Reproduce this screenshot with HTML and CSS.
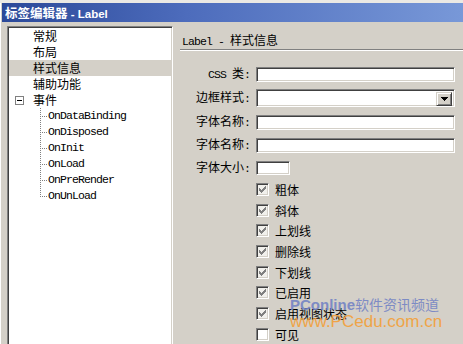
FILE: index.html
```html
<!DOCTYPE html>
<html lang="zh-CN">
<head>
<meta charset="utf-8">
<title>标签编辑器 - Label</title>
<link rel="stylesheet" href="styles.css">
</head>
<body>
<div class="window">
  <div class="titlebar"><span class="tcjk">标签编辑器</span> - Label</div>
  <div class="main">
    <div class="tree">
      <div class="node">常规</div>
      <div class="node">布局</div>
      <div class="node sel">样式信息</div>
      <div class="node">辅助功能</div>
      <div class="node parent"><span class="exp"></span>事件</div>
      <div class="node child"><span class="lat">OnDataBinding</span></div>
      <div class="node child"><span class="lat">OnDisposed</span></div>
      <div class="node child"><span class="lat">OnInit</span></div>
      <div class="node child"><span class="lat">OnLoad</span></div>
      <div class="node child"><span class="lat">OnPreRender</span></div>
      <div class="node child last"><span class="lat">OnUnLoad</span></div>
    </div>
    <div class="panel">
      <div class="head"><span class="lat">Label - </span>样式信息</div>
      <div class="form">
        <div class="lbl"><span class="lat">CSS </span>类<span class="lat">:</span></div>
        <div class="field"></div>
        <div class="lbl">边框样式<span class="lat">:</span></div>
        <div class="field select"><span class="btn"><svg width="7" height="4" viewBox="0 0 7 4" shape-rendering="crispEdges"><path d="M0 0h7v1h-1v1h-1v1h-1v1h-1v-1h-1v-1h-1v-1h-1z" fill="#000"/></svg></span></div>
        <div class="lbl">字体名称<span class="lat">:</span></div>
        <div class="field"></div>
        <div class="lbl">字体名称<span class="lat">:</span></div>
        <div class="field"></div>
        <div class="lbl">字体大小<span class="lat">:</span></div>
        <div class="field size"></div>
      </div>
      <div class="checks">
        <div class="check"><span class="box on"><svg width="9" height="9" viewBox="0 0 9 9" shape-rendering="crispEdges"><path d="M1 3h1v3h-1z M2 4h1v3h-1z M3 5h1v3h-1z M4 4h1v3h-1z M5 3h1v3h-1z M6 2h1v3h-1z M7 1h1v3h-1z" fill="#808080"/></svg></span>粗体</div>
        <div class="check"><span class="box on"><svg width="9" height="9" viewBox="0 0 9 9" shape-rendering="crispEdges"><path d="M1 3h1v3h-1z M2 4h1v3h-1z M3 5h1v3h-1z M4 4h1v3h-1z M5 3h1v3h-1z M6 2h1v3h-1z M7 1h1v3h-1z" fill="#808080"/></svg></span>斜体</div>
        <div class="check"><span class="box on"><svg width="9" height="9" viewBox="0 0 9 9" shape-rendering="crispEdges"><path d="M1 3h1v3h-1z M2 4h1v3h-1z M3 5h1v3h-1z M4 4h1v3h-1z M5 3h1v3h-1z M6 2h1v3h-1z M7 1h1v3h-1z" fill="#808080"/></svg></span>上划线</div>
        <div class="check"><span class="box on"><svg width="9" height="9" viewBox="0 0 9 9" shape-rendering="crispEdges"><path d="M1 3h1v3h-1z M2 4h1v3h-1z M3 5h1v3h-1z M4 4h1v3h-1z M5 3h1v3h-1z M6 2h1v3h-1z M7 1h1v3h-1z" fill="#808080"/></svg></span>删除线</div>
        <div class="check"><span class="box on"><svg width="9" height="9" viewBox="0 0 9 9" shape-rendering="crispEdges"><path d="M1 3h1v3h-1z M2 4h1v3h-1z M3 5h1v3h-1z M4 4h1v3h-1z M5 3h1v3h-1z M6 2h1v3h-1z M7 1h1v3h-1z" fill="#808080"/></svg></span>下划线</div>
        <div class="check"><span class="box on"><svg width="9" height="9" viewBox="0 0 9 9" shape-rendering="crispEdges"><path d="M1 3h1v3h-1z M2 4h1v3h-1z M3 5h1v3h-1z M4 4h1v3h-1z M5 3h1v3h-1z M6 2h1v3h-1z M7 1h1v3h-1z" fill="#808080"/></svg></span>已启用</div>
        <div class="check"><span class="box on"><svg width="9" height="9" viewBox="0 0 9 9" shape-rendering="crispEdges"><path d="M1 3h1v3h-1z M2 4h1v3h-1z M3 5h1v3h-1z M4 4h1v3h-1z M5 3h1v3h-1z M6 2h1v3h-1z M7 1h1v3h-1z" fill="#808080"/></svg></span>启用视图状态</div>
        <div class="check"><span class="box"></span>可见</div>
      </div>
    </div>
  </div>
  <div class="wm">
    <div class="wm1"><span class="wm-pc">PConline</span>软件资讯频道</div>
    <div class="wm2">www.PCedu.com.cn</div>
  </div>
</div>
</body>
</html>
```

FILE: styles.css
```css
* { box-sizing: border-box; margin: 0; padding: 0; }
html, body { width: 463px; height: 344px; overflow: hidden; }
body {
  background: #d4d0c8;
  font-family: "Noto Sans CJK SC", sans-serif;
  font-size: 12px;
  color: #000;
}
.window {
  position: relative;
  height: 344px;
  padding: 3px 0 0 2px;
  background: #d4d0c8;
  box-shadow: inset 0 3px 0 #ebe9e4, inset 1px 0 0 #fff;
  overflow: hidden;
}
.titlebar {
  height: 19px;
  line-height: 19px;
  padding-left: 3px;
  background: linear-gradient(90deg, #2b4999 0%, #4d6cbc 40%, #7898d8 100%);
  color: #fff;
  font: bold 11.5px "Liberation Sans", "Noto Sans CJK SC", sans-serif;
  white-space: nowrap;
}
.tcjk { font-size: 12.5px; font-family: "Noto Sans CJK SC", sans-serif; }
.main { display: flex; padding-top: 4px; }
.tree {
  flex: none;
  width: 166px;
  height: 330px;
  margin-left: 5px;
  padding: 1px;
  background: #fff;
  border: 1px solid;
  border-color: #808080 #fff #fff #808080;
  box-shadow: inset 1px 1px 0 #404040, inset -1px -1px 0 #d4d0c8;
}
.node {
  position: relative;
  height: 16px;
  line-height: 16px;
  padding-left: 24px;
  display: flex;
  align-items: center;
  white-space: nowrap;
}
.node.sel { background: #d4d0c8; }
.node.parent { padding-left: 6px; }
.exp {
  width: 9px;
  height: 9px;
  margin-right: 9px;
  border: 1px solid #808080;
  background: #fff;
  display: flex;
  align-items: center;
  justify-content: center;
}
.exp::before { content: ""; width: 5px; height: 1px; background: #000; }
.node.child { padding-left: 39px; }
.node.child::before {
  content: "";
  position: absolute;
  left: 31px;
  top: 0;
  width: 1px;
  height: 16px;
  background: repeating-linear-gradient(180deg, #808080 0 1px, transparent 1px 2px);
}
.node.child.last::before { height: 9px; }
.node.child::after {
  content: "";
  position: absolute;
  left: 32px;
  top: 8px;
  width: 6px;
  height: 1px;
  background: repeating-linear-gradient(90deg, transparent 0 1px, #808080 1px 2px);
}
.lat {
  font-family: "Liberation Mono", monospace;
  font-size: 11.5px;
  letter-spacing: -0.9px;
  white-space: pre;
}
.panel { flex: 1; margin-left: 7px; min-width: 0; }
.head {
  height: 24px;
  padding: 6px 0 0 2px;
  line-height: 16px;
  border-bottom: 1px solid #808080;
  box-shadow: 0 1px 0 #fff;
  white-space: nowrap;
}
.form {
  display: grid;
  grid-template-columns: 70px 199px;
  column-gap: 6px;
  row-gap: 7px;
  padding-top: 16px;
  align-items: center;
}
.lbl { text-align: right; white-space: nowrap; line-height: 14px; }
.field {
  height: 15px;
  background: #fff;
  border: 1px solid;
  border-color: #808080 #fff #fff #808080;
  box-shadow: inset 1px 1px 0 #404040, inset -1px -1px 0 #d4d0c8;
}
.field.select {
  height: 18px;
  padding: 2px;
  display: flex;
  justify-content: flex-end;
}
.field.size { width: 34px; height: 14px; }
.btn {
  width: 16px;
  height: 14px;
  background: #d4d0c8;
  border: 1px solid;
  border-color: #d4d0c8 #404040 #404040 #d4d0c8;
  box-shadow: inset 1px 1px 0 #fff, inset -1px -1px 0 #808080;
  display: flex;
  align-items: center;
  justify-content: center;
}
.btn svg { display: block; }
.checks { margin-top: 3px; padding-left: 76px; }
.check {
  height: 20.7px;
  display: flex;
  align-items: center;
  gap: 6px;
  white-space: nowrap;
}
.box {
  flex: none;
  width: 13px;
  height: 13px;
  padding: 1px;
  background: #fff;
  border: 1px solid;
  border-color: #808080 #fff #fff #808080;
  box-shadow: inset 1px 1px 0 #404040, inset -1px -1px 0 #d4d0c8;
}
.box.on { background: #f1f0ec; }
.box svg { display: block; }
.wm {
  position: absolute;
  left: 290px;
  top: 294px;
  white-space: nowrap;
  pointer-events: none;
}
.wm1 {
  height: 18px;
  line-height: 18px;
  color: #7484c4;
  font: 14px "Noto Sans CJK SC", sans-serif;
  opacity: 0.9;
}
.wm-pc { font: bold 15px "Liberation Sans", sans-serif; }
.wm2 {
  height: 18px;
  line-height: 18px;
  color: #f3a03a;
  font: 17px "Liberation Sans", sans-serif;
  opacity: 0.9;
}
```
